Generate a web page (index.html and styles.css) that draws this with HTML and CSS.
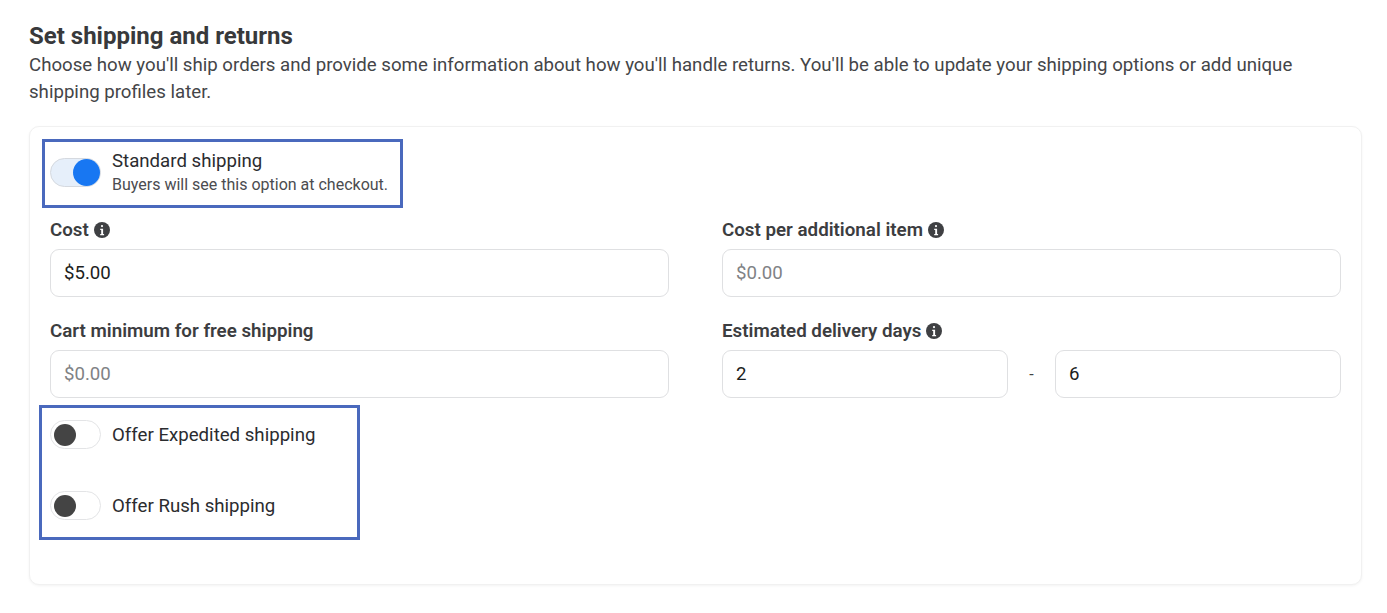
FILE: index.html
```html
<!DOCTYPE html>
<html lang="en">
<head>
<meta charset="utf-8">
<title>Set shipping and returns</title>
<link rel="stylesheet" href="styles.css">
</head>
<body>
<main class="page">
  <h1 class="title">Set shipping and returns</h1>
  <p class="intro">Choose how you'll ship orders and provide some information about how you'll handle returns. You'll be able to update your shipping options or add unique shipping profiles later.</p>
  <section class="card">
    <div class="option option-main">
      <span class="toggle toggle-on"><span class="knob"></span></span>
      <div class="option-text">
        <div class="option-name">Standard shipping</div>
        <div class="option-hint">Buyers will see this option at checkout.</div>
      </div>
    </div>
    <div class="fields">
      <div class="field">
        <div class="label">Cost <svg class="info" viewBox="0 0 16 16"><circle cx="8" cy="8" r="8"/><rect x="6.9" y="3" width="2.2" height="2.2" rx="1.1" class="glyph"/><path class="glyph" d="M6.2 6.7h2.9v5.2h1v1.3H6.2v-1.3h1V8H6.2z"/></svg></div>
        <div class="input value">$5.00</div>
      </div>
      <div class="field">
        <div class="label">Cost per additional item <svg class="info" viewBox="0 0 16 16"><circle cx="8" cy="8" r="8"/><rect x="6.9" y="3" width="2.2" height="2.2" rx="1.1" class="glyph"/><path class="glyph" d="M6.2 6.7h2.9v5.2h1v1.3H6.2v-1.3h1V8H6.2z"/></svg></div>
        <div class="input placeholder">$0.00</div>
      </div>
      <div class="field">
        <div class="label">Cart minimum for free shipping</div>
        <div class="input placeholder">$0.00</div>
      </div>
      <div class="field">
        <div class="label">Estimated delivery days <svg class="info" viewBox="0 0 16 16"><circle cx="8" cy="8" r="8"/><rect x="6.9" y="3" width="2.2" height="2.2" rx="1.1" class="glyph"/><path class="glyph" d="M6.2 6.7h2.9v5.2h1v1.3H6.2v-1.3h1V8H6.2z"/></svg></div>
        <div class="range">
          <div class="input value">2</div>
          <span class="dash">-</span>
          <div class="input value">6</div>
        </div>
      </div>
    </div>
    <div class="extras">
      <div class="option">
        <span class="toggle"><span class="knob"></span></span>
        <div class="option-name">Offer Expedited shipping</div>
      </div>
      <div class="option">
        <span class="toggle"><span class="knob"></span></span>
        <div class="option-name">Offer Rush shipping</div>
      </div>
    </div>
    <div class="highlight highlight-top"></div>
    <div class="highlight highlight-bottom"></div>
  </section>
</main>
</body>
</html>
```
FILE: styles.css
```css
* { box-sizing: border-box; }
html, body { margin: 0; background: #fff; }
body {
  font-family: Roboto, "Liberation Sans", Arial, sans-serif;
  color: #1c1e21;
  height: 613px;
  overflow: hidden;
}
.page { padding: 22px 25px 0 29px; }
.title {
  margin: 0;
  font-size: 24px;
  line-height: 28px;
  font-weight: 700;
  color: #38393b;
}
.intro {
  margin: 2px 0 0;
  font-size: 18.65px;
  line-height: 27px;
  color: #444548;
  width: 1300px;
}
.card {
  position: relative;
  margin-top: 20px;
  width: 1333px;
  height: 459px;
  padding: 0 20px;
  border: 1px solid #f1f1f1;
  border-radius: 10px;
  background: #fff;
  box-shadow: 0 1px 3px rgba(0, 0, 0, 0.05);
}
.option { display: flex; align-items: center; gap: 11px; }
.option-main { height: 58px; margin-top: 16px; }
.toggle {
  display: flex;
  align-items: center;
  flex: none;
  width: 51px;
  height: 29px;
  padding: 0 3px;
  border: 1px solid #e3e4e6;
  border-radius: 15px;
  background: #fff;
}
.toggle-on {
  justify-content: flex-end;
  padding: 0;
  background: #e6effa;
  border-color: #d5d9df;
}
.knob {
  display: block;
  width: 22px;
  height: 22px;
  border-radius: 50%;
  background: #444;
}
.toggle-on .knob {
  width: 27px;
  height: 27px;
  background: #1877f2;
}
.option-name { font-size: 18.65px; line-height: 24px; color: #2b2c2f; }
.option-hint { font-size: 16px; line-height: 22px; margin-top: 1px; color: #4b4c4f; }
.fields {
  display: grid;
  grid-template-columns: 619px 619px;
  column-gap: 53px;
  row-gap: 18px;
  margin-top: 13px;
}
.field { min-width: 0; }
.label {
  display: flex;
  align-items: center;
  gap: 5px;
  height: 30px;
  padding-top: 2px;
  margin-bottom: 5px;
  font-size: 18.75px;
  font-weight: 600;
  color: #3c3d40;
}
.info { width: 16px; height: 16px; margin-top: -1px; fill: #3f4043; }
.info .glyph { fill: #fff; }
.input {
  flex: 1;
  height: 48px;
  padding: 0 13px;
  display: flex;
  align-items: center;
  border: 1px solid #dfe0e2;
  border-radius: 9px;
  font-size: 18.65px;
  background: #fff;
}
.value { color: #1c1e21; }
.placeholder { color: #808285; }
.range { display: flex; align-items: center; }
.dash { width: 47px; text-align: center; font-size: 16px; color: #444; }
.extras {
  display: flex;
  flex-direction: column;
  gap: 42px;
  margin-top: 22px;
}
.highlight {
  position: absolute;
  border: 3px solid #4a69bd;
  pointer-events: none;
}
.highlight-top { left: 12px; top: 12px; width: 361px; height: 69px; }
.highlight-bottom { left: 9px; top: 278px; width: 321px; height: 135px; }
```
